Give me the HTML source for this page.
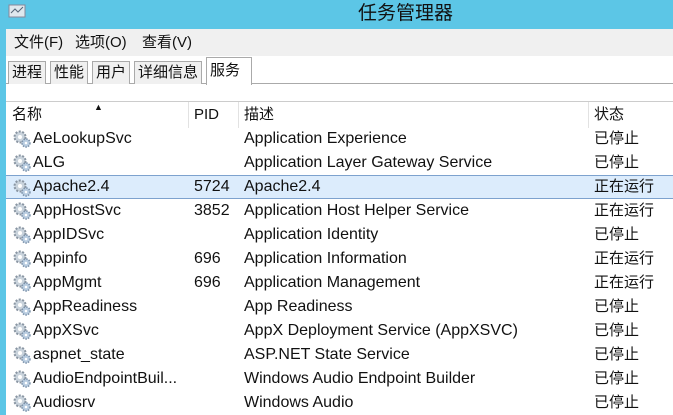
<!DOCTYPE html>
<html><head><meta charset="utf-8"><style>
*{margin:0;padding:0;box-sizing:border-box}
body{width:673px;height:415px;overflow:hidden;background:#fff;font-family:"Liberation Sans","Noto Sans CJK SC",sans-serif;font-size:16px;color:#111;position:relative}
.title{position:absolute;left:0;top:0;width:673px;height:29px;background:#5cc6e6}
.title span{position:absolute;left:358px;top:0;line-height:28px;font-size:19px;color:#111}
.lb{position:absolute;left:0;top:29px;width:6px;height:386px;background:#5cc6e6}
.menu{position:absolute;left:6px;top:29px;width:667px;height:27px;background:#f0f0f0}
.menu span{position:absolute;top:0;line-height:28px;font-size:15px}
.tabs{position:absolute;left:6px;top:56px;width:667px;height:28px;background:#fff;border-bottom:1px solid #aaa}
.tab{position:absolute;top:5px;height:23px;border:1px solid #aaa;border-bottom:none;background:#f0f0f0;padding:0 3px;line-height:22px;font-size:15px}
.tab.sel{top:1px;height:28px;background:#fff;line-height:26px}
.hdr{position:absolute;left:6px;top:101px;width:667px;height:26px;border-top:1px solid #ccc;background:#fff}
.hdr span{position:absolute;top:0;line-height:26px;font-size:15px}
.sep{position:absolute;top:0;width:1px;height:26px;background:#e2e2e2}
.row{position:absolute;left:6px;width:667px;height:24px}
.row span{position:absolute;top:0;line-height:24px;white-space:nowrap}
.row span.c{font-size:15px}
.row.sel{background:#dcecfc;border-top:1px solid #7da2ce;border-bottom:1px solid #7da2ce}
.row.sel span{top:-1px}
.row svg{position:absolute;left:5px;top:2px}
</style></head><body>
<div class="title"><svg style="position:absolute;left:8px;top:3px" width="20" height="18"><rect x="1" y="2" width="16" height="12" fill="#dfe8ee" stroke="#889"/><path d="M3 10l4-4 3 3 5-5" stroke="#567" fill="none"/></svg><span>任务管理器</span></div>
<div class="lb"></div>
<div class="menu"><span style="left:8px">文件(F)</span><span style="left:69px">选项(O)</span><span style="left:136px">查看(V)</span></div>
<div class="tabs">
<div class="tab" style="left:2px">进程</div>
<div class="tab" style="left:44px">性能</div>
<div class="tab" style="left:86px">用户</div>
<div class="tab" style="left:128px">详细信息</div>
<div class="tab sel" style="left:200px;width:46px">服务</div>
</div>
<div class="hdr"><span style="left:6px">名称</span><span style="left:88px;top:-8px;font-size:9px">▲</span><span style="left:188px">PID</span><span style="left:238px">描述</span><span style="left:588px">状态</span>
<div class="sep" style="left:182px"></div><div class="sep" style="left:232px"></div><div class="sep" style="left:582px"></div></div>
<div id="rows"></div>
<script>
var d=[["AeLookupSvc","","Application Experience","已停止"],["ALG","","Application Layer Gateway Service","已停止"],["Apache2.4","5724","Apache2.4","正在运行"],["AppHostSvc","3852","Application Host Helper Service","正在运行"],["AppIDSvc","","Application Identity","已停止"],["Appinfo","696","Application Information","正在运行"],["AppMgmt","696","Application Management","正在运行"],["AppReadiness","","App Readiness","已停止"],["AppXSvc","","AppX Deployment Service (AppXSVC)","已停止"],["aspnet_state","","ASP.NET State Service","已停止"],["AudioEndpointBuil...","","Windows Audio Endpoint Builder","已停止"],["Audiosrv","","Windows Audio","已停止"]];
var g='<svg width="22" height="20"><circle cx="9" cy="8" r="5.5" fill="#c9d3dc" stroke="#8a96a3" stroke-width="2" stroke-dasharray="2 1.5"/><circle cx="9" cy="8" r="2" fill="#fff"/><circle cx="15" cy="14" r="4" fill="#b8cce0" stroke="#7d93ab" stroke-width="1.5" stroke-dasharray="1.5 1.2"/><circle cx="15" cy="14" r="1.3" fill="#fff"/></svg>';
var h='';d.forEach(function(r,i){h+='<div class="row'+(i==2?' sel':'')+'" style="top:'+(127+24*i)+'px">'+g+'<span style="left:27px">'+r[0]+'</span><span style="left:188px">'+r[1]+'</span><span style="left:238px">'+r[2]+'</span><span class="c" style="left:588px">'+r[3]+'</span></div>'});
document.getElementById('rows').innerHTML=h;
</script>
</body></html>
